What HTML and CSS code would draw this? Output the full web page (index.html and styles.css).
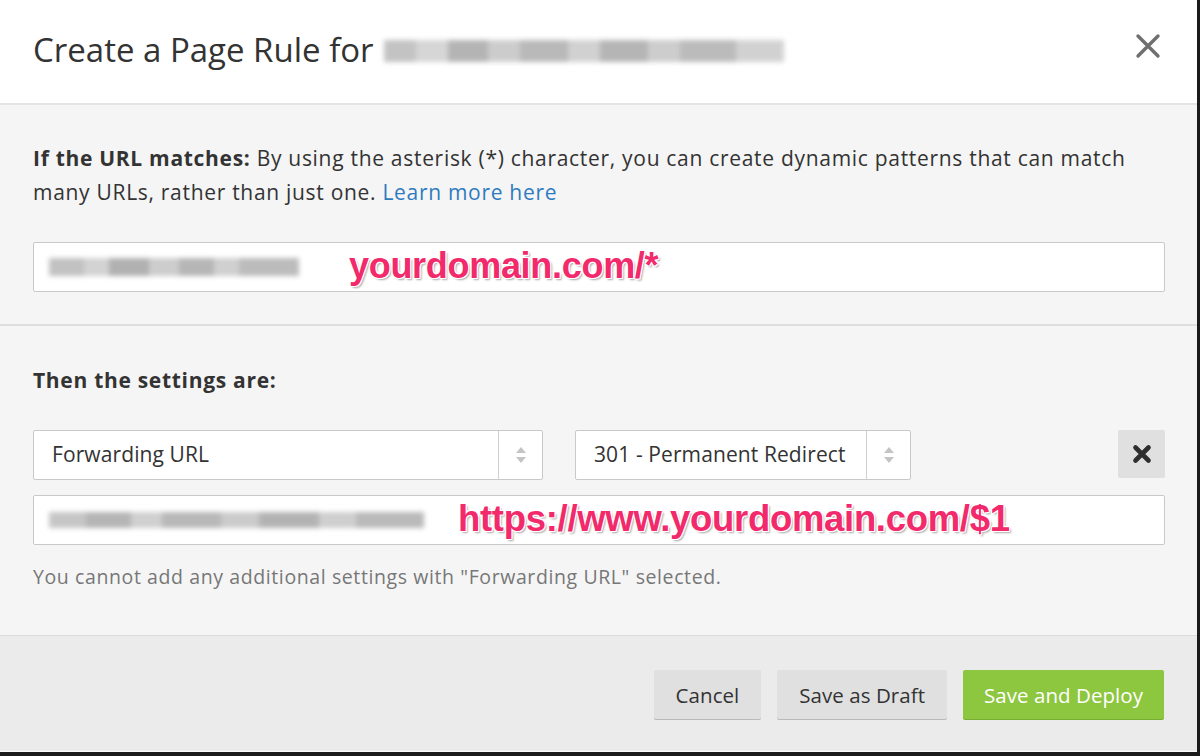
FILE: index.html
```html
<!DOCTYPE html>
<html>
<head>
<meta charset="utf-8">
<link rel="stylesheet" href="styles.css">
</head>
<body>
<div class="modal">
  <div class="header">
    <h1 class="title">Create a Page Rule for</h1>
    <div class="blur blur-title"></div>
    <button class="close" aria-label="Close">
      <svg width="26" height="26" viewBox="0 0 26 26"><path d="M3 3 L23 23 M23 3 L3 23" stroke="#6f6f6f" stroke-width="3.4" stroke-linecap="round"/></svg>
    </button>
  </div>
  <div class="section sec1">
    <p class="desc"><b>If the URL matches:</b> By using the asterisk (*) character, you can create dynamic patterns that can match many URLs, rather than just one. <a href="#">Learn more here</a></p>
    <div class="input">
      <div class="blur blur-in1"></div>
      <span class="pink pink1">yourdomain.com/*</span>
    </div>
  </div>
  <div class="section sec2">
    <p class="heading">Then the settings are:</p>
    <div class="selects">
      <div class="select sel1"><span class="sel-text">Forwarding URL</span><span class="arrows"><i class="up"></i><i class="down"></i></span></div>
      <div class="select sel2"><span class="sel-text">301 - Permanent Redirect</span><span class="arrows"><i class="up"></i><i class="down"></i></span></div>
      <button class="remove" aria-label="Remove">
        <svg width="20" height="20" viewBox="0 0 20 20"><path d="M3.5 3.5 L16.5 16.5 M16.5 3.5 L3.5 16.5" stroke="#2e2e2e" stroke-width="4.6" stroke-linecap="round"/></svg>
      </button>
    </div>
    <div class="input input2">
      <div class="blur blur-in2"></div>
      <span class="pink pink2">https://www.yourdomain.com/$1</span>
    </div>
    <p class="help">You cannot add any additional settings with "Forwarding URL" selected.</p>
  </div>
  <div class="footer">
    <button class="btn">Cancel</button>
    <button class="btn">Save as Draft</button>
    <button class="btn primary">Save and Deploy</button>
  </div>
</div>
</body>
</html>
```
FILE: styles.css
```css
html, body {
  margin: 0;
  padding: 0;
  background: #1b1b1b;
}
body {
  width: 1200px;
  height: 756px;
  overflow: hidden;
  font-family: "Open Sans", "Noto Sans", sans-serif;
  color: #333;
}
.modal {
  width: 1197px;
  height: 751px;
  background: #f5f5f5;
  border-bottom: 1px solid #fafafa;
  display: flex;
  flex-direction: column;
}
.header {
  height: 103px;
  background: #fff;
  border-bottom: 2px solid #e4e4e4;
  display: flex;
  align-items: center;
  padding-left: 33px;
  position: relative;
}
.title {
  margin: 0;
  font-size: 33px;
  font-weight: 400;
  color: #333;
  line-height: 40px;
  margin-top: -4px;
}
.blur {
  filter: blur(2.5px);
}
.blur-title {
  width: 400px;
  height: 22px;
  margin-left: 10px;
  margin-top: -2px;
  background:
    linear-gradient(90deg, #b9b9b9 0 8%, #cfcfcf 8% 16%, #a8a8a8 16% 26%, #c4c4c4 26% 34%, #adadad 34% 46%, #c9c9c9 46% 54%, #a9a9a9 54% 66%, #c5c5c5 66% 74%, #b0b0b0 74% 88%, #cacaca 88% 100%);
  opacity: 0.85;
}
.close {
  position: absolute;
  right: 36px;
  top: 33px;
  border: 0;
  background: none;
  padding: 0;
  width: 26px;
  height: 26px;
}
.section {
  padding: 0 32px 0 33px;
}
.sec1 {
  padding-top: 36px;
  padding-bottom: 32px;
  border-bottom: 2px solid #dedede;
}
.desc {
  margin: 0;
  font-size: 21px;
  letter-spacing: 0.7px;
  line-height: 34px;
  color: #333;
}
.desc b { font-weight: 700; }
.desc a {
  color: #2f7bbf;
  text-decoration: none;
}
.input {
  margin-top: 33px;
  height: 48px;
  background: #fff;
  border: 1px solid #c9c9c9;
  border-radius: 2px;
  display: flex;
  align-items: center;
  padding-left: 15px;
}
.blur-in1 {
  width: 250px;
  height: 18px;
  background: linear-gradient(90deg, #c2c2c2 0 14%, #d3d3d3 14% 24%, #b1b1b1 24% 40%, #cdcdcd 40% 52%, #b6b6b6 52% 66%, #d0d0d0 66% 76%, #bcbcbc 76% 100%);
}
.pink {
  font-family: "Liberation Sans", Arial, sans-serif;
  font-weight: 700;
  color: #f2296b;
  text-shadow: 0 0 2px #fff, 1px 1px 0 #fff, -1px -1px 0 #fff, 1px -1px 0 #fff, -1px 1px 0 #fff, 2px 2px 2px rgba(0,0,0,0.35);
  letter-spacing: -0.3px;
}
.pink1 {
  font-size: 36px;
  margin-left: 50px;
  margin-top: -2px;
}
.sec2 {
  padding-top: 37px;
  flex: 1;
}
.heading {
  margin: 0;
  font-size: 21px;
  letter-spacing: 0.7px;
  font-weight: 700;
  line-height: 34px;
}
.selects {
  margin-top: 33px;
  display: flex;
  align-items: flex-start;
}
.select {
  height: 48px;
  background: #fff;
  border: 1px solid #c9c9c9;
  border-radius: 2px;
  display: flex;
  align-items: center;
}
.sel1 { width: 508px; }
.sel2 { width: 334px; margin-left: 32px; }
.sel-text {
  flex: 1;
  font-size: 21px;
  letter-spacing: 0.1px;
  padding-left: 18px;
  color: #333;
  margin-top: -2px;
}
.arrows {
  width: 43px;
  height: 100%;
  border-left: 1px solid #d0d0d0;
  display: flex;
  flex-direction: column;
  align-items: center;
  justify-content: center;
  gap: 4px;
}
.arrows i {
  width: 0;
  height: 0;
  border-left: 5px solid transparent;
  border-right: 5px solid transparent;
}
.arrows .up { border-bottom: 6px solid #c4c4c4; }
.arrows .down { border-top: 6px solid #c4c4c4; }
.remove {
  margin-left: auto;
  width: 47px;
  height: 48px;
  border: 0;
  border-radius: 2px;
  background: #e0e0e0;
  display: flex;
  align-items: center;
  justify-content: center;
  padding: 0;
}
.input2 {
  margin-top: 15px;
}
.blur-in2 {
  width: 375px;
  height: 16px;
  background: linear-gradient(90deg, #c6c6c6 0 10%, #b5b5b5 10% 22%, #d0d0d0 22% 30%, #b8b8b8 30% 46%, #cbcbcb 46% 56%, #b3b3b3 56% 72%, #cfcfcf 72% 82%, #bababa 82% 100%);
}
.pink2 {
  font-size: 36.5px;
  margin-left: 34px;
  margin-top: -2px;
}
.help {
  margin: 17px 0 0;
  font-size: 19.5px;
  letter-spacing: 0.6px;
  line-height: 30px;
  color: #777;
}
.footer {
  height: 116px;
  box-sizing: border-box;
  border-top: 1px solid #dcdcdc;
  background: #ebebeb;
  display: flex;
  justify-content: flex-end;
  align-items: flex-start;
  gap: 16px;
  padding: 34px 33px 0 0;
}
.btn {
  font-family: "Open Sans", "Noto Sans", sans-serif;
  font-size: 20.5px;
  letter-spacing: 0.05px;
  color: #333;
  height: 49px;
  padding: 0 22px;
  border: 0;
  border-radius: 2px;
  background: #e0e0e0;
  box-shadow: 0 1px 0 #b9b9b9;
}
.btn.primary {
  background: #8dc63f;
  color: #fff;
  box-shadow: 0 1px 0 #7aad33;
  padding: 0 21px;
}
```
